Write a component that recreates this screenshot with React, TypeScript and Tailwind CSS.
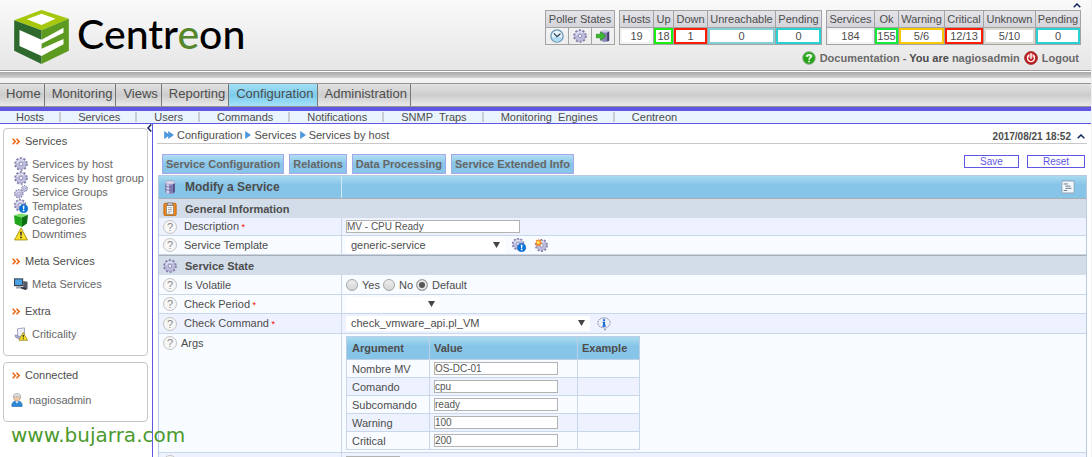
import React from "react";

const MAIN_MENU = ["Home", "Monitoring", "Views", "Reporting", "Configuration", "Administration"];

const SUB_MENU = [
  "Hosts",
  "Services",
  "Users",
  "Commands",
  "Notifications",
  "SNMP\u00a0 Traps",
  "Monitoring\u00a0 Engines",
  "Centreon",
];

const HOST_STATES = [
  { label: "Hosts", value: "19", width: "w-[34px]", border: "border-[#f2f2f2]" },
  { label: "Up", value: "18", width: "w-[20px]", border: "border-[#19ee11]" },
  { label: "Down", value: "1", width: "w-[34px]", border: "border-[#f91e05]" },
  { label: "Unreachable", value: "0", width: "w-[68px]", border: "border-[#82cfd8]" },
  { label: "Pending", value: "0", width: "w-[46px]", border: "border-[#2ad1d4]" },
];

const SERVICE_STATES = [
  { label: "Services", value: "184", width: "w-[48px]", border: "border-[#f2f2f2]" },
  { label: "Ok", value: "155", width: "w-[24px]", border: "border-[#13eb3a]" },
  { label: "Warning", value: "5/6", width: "w-[46px]", border: "border-[#f8c706]" },
  { label: "Critical", value: "12/13", width: "w-[39px]", border: "border-[#f91e05]" },
  { label: "Unknown", value: "5/10", width: "w-[52px]", border: "border-[#dcdad2]" },
  { label: "Pending", value: "0", width: "w-[45px]", border: "border-[#2ad1d4]" },
];

const ARGS = [
  { name: "Nombre MV", value: "OS-DC-01" },
  { name: "Comando", value: "cpu" },
  { name: "Subcomando", value: "ready" },
  { name: "Warning", value: "100" },
  { name: "Critical", value: "200" },
];

/* ---------- Icons ---------- */

function Svg({ children, className = "w-3.5 h-3.5" }: { children: React.ReactNode; className?: string }) {
  return (
    <svg viewBox="0 0 16 16" className={`${className} shrink-0`} aria-hidden="true">
      {children}
    </svg>
  );
}

function GearShape({ cx = 8, cy = 8, s = 1 }: { cx?: number; cy?: number; s?: number }) {
  return (
    <g transform={`translate(${cx} ${cy}) scale(${s})`}>
      <circle r="6.5" fill="none" stroke="#7f7da8" strokeWidth="2.6" strokeDasharray="2.3 1.78" />
      <circle r="5.9" fill="#bebddd" stroke="#9795be" strokeWidth="0.7" />
      <path d="M-4.500-1A4.600 4.600 0 0 1 3-3.500" fill="none" stroke="#e6e6f5" strokeWidth="1.500" />
      <circle r="2" fill="#f4f4fb" stroke="#8684b0" strokeWidth="0.9" />
    </g>
  );
}

function GearIcon() {
  return <Svg><GearShape /></Svg>;
}

function GearsIcon() {
  return (
    <Svg>
      <GearShape cx={5.5} cy={10} s={0.7} />
      <GearShape cx={12} cy={4} s={0.5} />
    </Svg>
  );
}

function TemplateIcon() {
  return (
    <Svg>
      <GearShape cx={7} cy={7} s={0.92} />
      <circle cx="11" cy="11" r="4.8" fill="#0b74dc" stroke="#0558ad" strokeWidth="0.6" />
      <path d="M10 7.8h2l-.4 3.8h-1.2zM10.1 12.4h1.8v1.5h-1.8z" fill="#fff" />
    </Svg>
  );
}

function GearSparkIcon() {
  return (
    <Svg>
      <GearShape cx={8.5} cy={8.5} s={0.95} />
      <path d="M4.5 0l1.2 2.6 2.8-1-1 2.8 2.3 1.3-2.6 1.1.6 2.7-2.6-1.2L3 10l.2-2.6L.4 6.2l2.5-1.4L1.9 2l2.5.8z" fill="#f5821e" />
      <circle cx="5" cy="5" r="1.8" fill="#ffe15a" />
    </Svg>
  );
}

function GreenCubeIcon() {
  return (
    <Svg>
      <path d="M0 2.500L7 .5l9 1.5-7 3z" fill="#7ee06a" />
      <path d="M0 2.500L9 5v11l-8-3.600z" fill="#1fa51b" />
      <path d="M9 5l7-3-1.200 10.100L9 16z" fill="#0c6f10" />
    </Svg>
  );
}

function WarningIcon() {
  return (
    <Svg>
      <path d="M8 1l7.4 13.8H.6z" fill="#fbe12a" stroke="#a38d12" strokeWidth="1" strokeLinejoin="round" />
      <path d="M7 5.5h2L8.6 10H7.4zM7.1 11h1.8v1.8H7.1z" fill="#222" />
    </Svg>
  );
}

function MonitorIcon() {
  return (
    <Svg>
      <path d="M0 1.5h10.5v9H0z" fill="#3b4150" />
      <path d="M1.2 2.7h8.1v6.4H1.2z" fill="#4aa3e6" />
      <path d="M3 10.5h5l1 2.5H2z" fill="#9a9faa" />
      <path d="M10.5 4.5l5 1v8.5l-5-1.4z" fill="#555b69" />
      <path d="M8 11l6 1.5v2.5L8 13z" fill="#31353f" />
    </Svg>
  );
}

function CriticalityIcon() {
  return (
    <Svg>
      <path d="M4 2l8-1v8l-8 3z" fill="#eeeef6" stroke="#9c9bbd" />
      <path d="M1 9l4 1 3 4-6-2z" fill="#a9a8cc" stroke="#807fa8" strokeWidth="0.7" />
      <path d="M10.6 6.2l5 9H5.6z" fill="#fbe12a" stroke="#8d7a10" strokeWidth="0.8" strokeLinejoin="round" />
      <path d="M9.9 9h1.4l-.3 3h-.8zM10 12.8h1.2V14H10z" fill="#111" />
    </Svg>
  );
}

function UserIcon() {
  return (
    <Svg>
      <path d="M2.2 15.5c-.6-4 1.6-6.3 5.8-6.3s6.4 2.3 5.8 6.3z" fill="#2b87d8" stroke="#1b62a8" strokeWidth="0.7" />
      <path d="M6 9.3h4L8 12z" fill="#fff" />
      <circle cx="8" cy="5" r="4.1" fill="#f3c9a2" stroke="#9c9c9c" strokeWidth="0.7" />
      <path d="M3.8 5C3.6 2 5.5.5 8 .5s4.400 1.500 4.200 4.500C10 4 6 4 3.800 5z" fill="#dcdcdc" stroke="#9c9c9c" strokeWidth="0.6" />
    </Svg>
  );
}

function DatabaseIcon() {
  return (
    <Svg>
      <path d="M2.5 3v10.5c0 1.3 2.5 2.2 5.5 2.2s5.500-.9 5.500-2.200V3z" fill="#8682b8" />
      <path d="M4 4v10.800c1 .4 1.800.6 3 .7V5z" fill="#d6d5ee" />
      <path d="M11.500 4.500l2-.8v10l-2 1.300z" fill="#4e4a82" />
      <ellipse cx="8" cy="2.8" rx="5.5" ry="2.2" fill="#d8d7ea" stroke="#8c89b4" strokeWidth="0.6" />
      <path d="M2.500 6.800c2 1.700 9 1.700 11 0M2.500 10.500c2 1.700 9 1.700 11 0" fill="none" stroke="#5d5994" strokeWidth="0.8" />
    </Svg>
  );
}

function ClipboardIcon() {
  return (
    <Svg>
      <rect x="1" y="1.5" width="14" height="14" rx="1.5" fill="#ee8a1d" stroke="#bd640a" />
      <path d="M4 4h8v10H4z" fill="#fff" stroke="#777" strokeWidth="0.8" />
      <path d="M5 1h6v3H5z" fill="#c9c9d6" stroke="#666" strokeWidth="0.7" />
      <path d="M5.500 6.500h5M5.500 8.500h5M5.500 10.500h5M5.500 12.300h3" stroke="#999" strokeWidth="0.9" />
    </Svg>
  );
}

function ClockIcon() {
  return (
    <Svg>
      <circle cx="8" cy="8" r="7" fill="#e8f5fd" stroke="#6d97b5" strokeWidth="1.5" />
      <path d="M2.500 9a5.500 5.500 0 0 0 11 0z" fill="#b2dcf5" />
      <path d="M4.500 5L8 8.700 12 5.500" fill="none" stroke="#2f4256" strokeWidth="1.5" />
    </Svg>
  );
}

function ExportIcon() {
  return (
    <Svg>
      <path d="M6 2v11.500c1.500 1.600 7.500 1.600 9 0V2z" fill="#8783b4" />
      <path d="M12.800 3v11l2.200-.6V2z" fill="#3f3b6b" />
      <ellipse cx="10.5" cy="2.5" rx="4.5" ry="1.6" fill="#cfcde4" />
      <path d="M0 6h5V3l6 5-6 5v-3H0z" fill="#3cbd2e" stroke="#1d7d17" strokeWidth="0.7" />
    </Svg>
  );
}

function DocIcon() {
  return (
    <Svg>
      <circle cx="8" cy="8" r="7.3" fill="#27a417" stroke="#a8b5a8" />
      <path d="M3 6a5.300 4 0 0 1 10 0 8 5 0 0 1-10 0" fill="#6bd05c" />
      <path d="M5.700 6.500c0-3 4.800-3 4.800-.3C10.500 8 8.100 8 8.100 10" fill="none" stroke="#fff" strokeWidth="1.8" />
      <path d="M7.200 11.100h1.900v1.800H7.200z" fill="#fff" />
    </Svg>
  );
}

function LogoutIcon() {
  return (
    <Svg>
      <circle cx="8" cy="8" r="7.3" fill="#c4151a" stroke="#8f3535" />
      <path d="M2.800 6.500a5.300 5 0 0 1 10.400 0c-3 2-7 2-10.400 0" fill="#e2676a" />
      <path d="M5.300 5.200a4 4 0 1 0 5.400 0M8 3v5.500" fill="none" stroke="#fff" strokeWidth="1.6" strokeLinecap="round" />
    </Svg>
  );
}

function InfoBubbleIcon() {
  return (
    <Svg>
      <path d="M8 1c4.300 0 7 2.300 7 5.700 0 2.500-1.600 4.300-4 5.100L9 15.500l-.5-3.300C4 12.500 1 10.300 1 6.700 1 3.300 3.700 1 8 1z" fill="#edf1fa" stroke="#8f90b0" strokeWidth="1.1" strokeDasharray="2 0.7" />
      <path d="M7 2.500h2.200v2H7zM6.200 5.500h3v4.300h1v1.200H6v-1.200h1V6.700h-.8z" fill="#1067d6" />
    </Svg>
  );
}

function ListIcon() {
  return (
    <Svg>
      <rect x="1" y="1" width="14" height="14" rx="1" fill="#f5f9fc" stroke="#8ba9bf" strokeWidth="1.2" />
      <path d="M3 4.500h5M5 7h6M5 9.500h7M3 12h4" stroke="#68788a" strokeWidth="1.1" />
    </Svg>
  );
}

function OrangeChevrons() {
  return (
    <svg viewBox="0 0 8 7" className="w-2 h-[7px] shrink-0" aria-hidden="true">
      <path d="M.7.7l2.600 2.800L.7 6.300M4.500.7l2.600 2.800-2.600 2.800" fill="none" stroke="#f26411" strokeWidth="1.5" />
    </svg>
  );
}

function Caret() {
  return (
    <svg viewBox="0 0 8 5" className="w-2 h-[5px]" aria-hidden="true">
      <path d="M.7 4.300L4 1l3.300 3.300" fill="none" stroke="#12265c" strokeWidth="1.5" />
    </svg>
  );
}

function BlueArrow({ double = false }: { double?: boolean }) {
  return (
    <svg viewBox={double ? "0 0 10 8" : "0 0 6 8"} className={double ? "w-2.5 h-2" : "w-1.5 h-2"} aria-hidden="true">
      <path d="M.5.5L5.500 4 .5 7.500z" fill="#4b9ae0" stroke="#3a82c8" strokeWidth="0.5" />
      {double && <path d="M4.500.5L9.500 4l-5 3.500z" fill="#4b9ae0" stroke="#3a82c8" strokeWidth="0.5" />}
    </svg>
  );
}

function CentreonCube() {
  return (
    <svg viewBox="42 30 164 162" className="w-[55px] h-[54px]" aria-hidden="true">
      <path d="M124 30L206 56 124 91 42 61z" fill="#a5c70c" />
      <path d="M124 41L166 56 124 75 80 58z" fill="#fff" />
      <path d="M42 61L124 91V192L42 152z" fill="#2e6a2d" />
      <path d="M124 91L206 56V152L124 192z" fill="#5c9a20" />
      <path d="M58 90L124 119 190 83V98L124 131V146L190 117V133L124 168 58 138z" fill="#fff" />
    </svg>
  );
}

/* ---------- Header ---------- */

interface StateCell {
  label: string;
  value: string;
  width: string;
  border: string;
}

function StateTable({ cells }: { cells: StateCell[] }) {
  return (
    <table className="border-collapse text-center leading-[13px]">
      <thead>
        <tr className="h-[17px] bg-linear-to-b from-[#e4e4e8] to-[#d3d3da]">
          {cells.map((c) => (
            <th key={c.label} className={`${c.width} border border-[#a3a3a3] p-0 font-normal`}>{c.label}</th>
          ))}
        </tr>
      </thead>
      <tbody>
        <tr className="h-[17px] bg-white">
          {cells.map((c) => (
            <td key={c.label} className="border border-[#a3a3a3] p-0">
              <div className={`h-4 border-2 leading-[12px] ${c.border}`}>{c.value}</div>
            </td>
          ))}
        </tr>
      </tbody>
    </table>
  );
}

function Header() {
  return (
    <header className="flex shrink-0 justify-between border-b border-[#9c9c9c] bg-linear-to-b from-[#fafafa] to-[#e6e6e6]">
      <div className="flex items-start gap-2 pl-3.5 pt-2.5">
        <CentreonCube />
        <span className="font-['Lato'] text-[41px] leading-[48px] font-medium text-black">
          Centr<span className="text-[#55872a]">e</span>on
        </span>
      </div>
      <div className="flex h-[70px] flex-col items-end pr-2.5">
        <button type="button" aria-label="Hide header" className="flex h-2.5 items-center">
          <Caret />
        </button>
        <div className="flex gap-1">
          <table className="border-collapse text-center leading-[13px]">
            <thead>
              <tr className="h-[17px] bg-linear-to-b from-[#e4e4e8] to-[#d3d3da]">
                <th colSpan={3} className="border border-[#a3a3a3] p-0 font-normal">Poller States</th>
              </tr>
            </thead>
            <tbody>
              <tr className="h-[17px]">
                {[<ClockIcon />, <GearIcon />, <ExportIcon />].map((icon, i) => (
                  <td key={i} className="w-[23px] border border-[#a3a3a3] p-0">
                    <div className="flex h-4 items-center justify-center">{icon}</div>
                  </td>
                ))}
              </tr>
            </tbody>
          </table>
          <StateTable cells={HOST_STATES} />
          <StateTable cells={SERVICE_STATES} />
        </div>
        <div className="mt-[5px] flex items-center gap-1 pr-0.5 font-bold leading-4 text-[#6a6a6a]">
          <DocIcon />
          <span>
            <a href="#doc">Documentation</a> - <span className="text-[#4a4a4a]">You are</span> <a href="#me">nagiosadmin</a>
          </span>
          <LogoutIcon />
          <a href="#logout">Logout</a>
        </div>
      </div>
    </header>
  );
}

function Menus() {
  return (
    <div className="shrink-0">
      <div className="h-[7px] border-t border-white bg-linear-to-b from-[#a8a8a8] to-[#d2d2d2]" />
      <div className="h-[5px] bg-[#f3f2f4]" />
      <nav className="flex h-6 border-y border-[#959595] bg-linear-to-b from-[#e2e2e2] via-[#cdcdcd] to-[#e9e9e9] text-[13px] leading-5">
        {MAIN_MENU.map((item) => (
          <a
            key={item}
            href={`#${item}`}
            className={
              item === "Configuration"
                ? "border-r border-[#777] bg-linear-to-b from-[#a5e2f6] via-[#7bcbec] to-[#a5e2fa] pl-[7px] pr-[3px]"
                : "border-r border-[#777] pl-[7px] pr-[3px] first:pl-1.5"
            }
          >
            {item}
          </a>
        ))}
      </nav>
      <nav className="flex items-center border-t-4 border-b border-[#5f57e3] bg-[#eaf4fe] pl-4 leading-3">
        {SUB_MENU.map((item, i) => (
          <React.Fragment key={item}>
            {i > 0 && <span className="ml-[15px] mr-[17px] h-2.5 w-0.5 bg-[#c9cdd4]" />}
            <a href={`#${item}`}>{item}</a>
          </React.Fragment>
        ))}
      </nav>
    </div>
  );
}

/* ---------- Sidebar ---------- */

function SideHeading({ children }: { children: React.ReactNode }) {
  return (
    <h2 className="flex items-center gap-[5px] pl-2 leading-[14px]">
      <OrangeChevrons />
      {children}
    </h2>
  );
}

function SideItem({ icon, children }: { icon: React.ReactNode; children: React.ReactNode }) {
  return (
    <li>
      <a href="#item" className="flex items-center gap-1 whitespace-nowrap pl-2.5 leading-[14px] text-[#666]">
        {icon}
        {children}
      </a>
    </li>
  );
}

function Sidebar() {
  return (
    <aside className="relative w-[153px] shrink-0 border-r border-[#5f57e3] pl-[3px] pr-1 pt-1">
      <button type="button" aria-label="Collapse menu" className="absolute right-0 top-0">
        <svg viewBox="0 0 5 8" className="w-[5px] h-2" aria-hidden="true">
          <path d="M4.300.5L1 4l3.300 3.500" fill="none" stroke="#12265c" strokeWidth="1.5" />
        </svg>
      </button>
      <div className="rounded border border-[#c8c8c8] pb-3.5 pt-[5px]">
        <SideHeading>Services</SideHeading>
        <ul className="mb-[13px] mt-[9px]">
          <SideItem icon={<GearIcon />}>Services by host</SideItem>
          <SideItem icon={<GearIcon />}>Services by host group</SideItem>
          <SideItem icon={<GearsIcon />}>Service Groups</SideItem>
          <SideItem icon={<TemplateIcon />}>Templates</SideItem>
          <SideItem icon={<GreenCubeIcon />}>Categories</SideItem>
          <SideItem icon={<WarningIcon />}>Downtimes</SideItem>
        </ul>
        <SideHeading>Meta Services</SideHeading>
        <ul className="mb-[13px] mt-[9px]">
          <SideItem icon={<MonitorIcon />}>Meta Services</SideItem>
        </ul>
        <SideHeading>Extra</SideHeading>
        <ul className="mt-[9px]">
          <SideItem icon={<CriticalityIcon />}>Criticality</SideItem>
        </ul>
      </div>
      <div className="mt-1.5 rounded border border-[#c8c8c8] pb-3.5 pt-[5px]">
        <SideHeading>Connected</SideHeading>
        <p className="mt-[11px] flex items-center gap-[5px] pl-1.5 leading-[14px] text-[#666]">
          <UserIcon />
          nagiosadmin
        </p>
      </div>
    </aside>
  );
}

/* ---------- Form ---------- */

function HelpMark() {
  return (
    <span className="flex h-3.5 w-3.5 shrink-0 items-center justify-center rounded-full border border-[#c4c4c4] bg-[#f7f7f7] leading-3 text-[#8a8a8a]">
      ?
    </span>
  );
}

interface RowProps {
  label?: string;
  htmlFor?: string;
  required?: boolean;
  className: string;
  labelClass?: string;
  children: React.ReactNode;
}

function Row({ label, htmlFor, required, className, labelClass = "gap-[7px] items-center", children }: RowProps) {
  return (
    <div className={`flex border-b border-[#c9d7ea] ${className}`}>
      <div className={`flex w-[183px] shrink-0 border-r border-[#c9d7ea] pl-1 ${labelClass}`}>
        <HelpMark />
        <label htmlFor={htmlFor}>
          {label}
          {required && <span className="text-[9px] text-[#f00]"> *</span>}
        </label>
      </div>
      <div className="flex items-center pl-1">{children}</div>
    </div>
  );
}

function SectionHeading({ icon, children }: { icon: React.ReactNode; children: React.ReactNode }) {
  return (
    <h2 className="flex h-5 items-center gap-2 border-t border-[#a9adb4] bg-[#d3dde9] pl-1 font-bold">
      {icon}
      {children}
    </h2>
  );
}

function Select({ id, value, className }: { id: string; value: string; className: string }) {
  return (
    <span className="relative">
      <select id={id} defaultValue={value} className={`block h-[15px] appearance-none bg-white pl-[5px] leading-[15px] ${className}`}>
        <option value={value}>{value}</option>
      </select>
      <svg viewBox="0 0 7 6" className="pointer-events-none absolute right-[5px] top-1 w-[7px] h-1.5" aria-hidden="true">
        <path d="M0 0h7L3.500 6z" fill="#444" />
      </svg>
    </span>
  );
}

const INPUT = "block h-[13px] border border-[#b3b3b3] bg-white p-0 text-[10px] leading-[11px] text-[#555]";
const RADIO =
  "h-3 w-3 appearance-none rounded-full border border-[#a6a6a6] bg-linear-to-b from-[#eee] to-[#d4d4d4] checked:bg-none checked:bg-[#555] checked:shadow-[inset_0_0_0_2px_#e6e6e6]";

function ServiceForm() {
  return (
    <form className="border-x border-t border-[#b9cbe3]">
      <div className="flex bg-linear-to-b from-[#a9dbf0] via-[#87c5e8] via-40% to-[#87c5e8]">
        <h1 className="flex h-[22px] w-[183px] shrink-0 items-center gap-2 border-r border-[#d4ebf7] pl-1 text-xs font-bold">
          <DatabaseIcon />
          Modify a Service
        </h1>
        <div className="flex flex-1 items-center justify-end pr-[11px]">
          <ListIcon />
        </div>
      </div>

      <SectionHeading icon={<ClipboardIcon />}>General Information</SectionHeading>
      <Row label="Description" htmlFor="description" required className="h-[18px] bg-[#edf2fe]">
        <input id="description" type="text" defaultValue="MV - CPU Ready" className={`${INPUT} w-[174px]`} />
      </Row>
      <Row label="Service Template" htmlFor="template" className="h-[19px] bg-[#f8fbff]">
        <Select id="template" value="generic-service" className="w-[159px]" />
        <span className="ml-[7px] flex gap-2">
          <TemplateIcon />
          <GearSparkIcon />
        </span>
      </Row>

      <SectionHeading icon={<GearIcon />}>Service State</SectionHeading>
      <Row label="Is Volatile" className="h-5 bg-[#f8fbff]">
        <div className="flex gap-[3px]">
          {["Yes", "No", "Default"].map((option) => (
            <label key={option} className="flex items-center gap-1">
              <input type="radio" name="volatile" defaultChecked={option === "Default"} className={RADIO} />
              {option}
            </label>
          ))}
        </div>
      </Row>
      <Row label="Check Period" htmlFor="period" required className="h-[19px] bg-[#f8fbff]">
        <Select id="period" value="" className="w-[94px]" />
      </Row>
      <Row label="Check Command" htmlFor="command" required className="h-5 bg-[#edf2fe]">
        <Select id="command" value="check_vmware_api.pl_VM" className="w-[244px]" />
        <span className="ml-[7px]">
          <InfoBubbleIcon />
        </span>
      </Row>
      <Row label="Args" className="bg-[#f8fbff]" labelClass="gap-1 items-start pt-0.5 leading-[14px]">
        <table className="my-0.5 border-collapse text-left">
          <thead>
            <tr className="h-[23px] bg-linear-to-b from-[#a9dbf0] via-[#87c5e8] via-40% to-[#87c5e8]">
              <th className="w-[83px] border border-[#bccfe6] px-[5px] py-0">Argument</th>
              <th className="w-[148px] border border-[#bccfe6] px-1 py-0">Value</th>
              <th className="w-[62px] border border-[#bccfe6] px-1 py-0">Example</th>
            </tr>
          </thead>
          <tbody>
            {ARGS.map((arg) => (
              <tr key={arg.name} className="h-[18px] bg-[#f8fbff] even:bg-[#edf2fe]">
                <td className="border border-[#c9d7ea] px-[5px] py-0">
                  <label htmlFor={arg.name}>{arg.name}</label>
                </td>
                <td className="border border-[#c9d7ea] px-1 py-0">
                  <input id={arg.name} type="text" defaultValue={arg.value} className={`${INPUT} w-[124px]`} />
                </td>
                <td className="border border-[#c9d7ea]" />
              </tr>
            ))}
          </tbody>
        </table>
      </Row>
      <Row className="h-[19px] bg-[#edf2fe]">
        <input aria-label="Max Check Attempts" type="text" className={`${INPUT} w-[54px]`} />
      </Row>
    </form>
  );
}

const TAB = "border border-[#a3a8ec] bg-linear-to-b from-[#b4def3] via-[#88c5e8] via-50% to-[#88c5e8] px-[3px] font-bold leading-[18px] text-[#666]";
const ACTION = "h-[13px] border border-[#5f57e3] bg-white text-[10px] leading-[11px] text-[#5f57e3]";

export default function App() {
  return (
    <div className="relative flex h-screen flex-col overflow-hidden border-r border-[#f1f1f1] bg-white font-['Liberation_Sans',Arial,sans-serif] text-[11px] leading-[14px] text-[#4d4d4d]">
      <Header />
      <Menus />
      <div className="flex min-h-0 flex-1">
        <Sidebar />
        <main className="min-w-0 flex-1 px-1">
          <div className="flex justify-between border-b border-[#c8c8c8]">
            <div className="flex h-[19px] items-center gap-[3px] pl-[7px] pt-0.5">
              <BlueArrow double />
              <a href="#configuration">Configuration</a>
              <BlueArrow />
              <a href="#services">Services</a>
              <BlueArrow />
              <a href="#by-host">Services by host</a>
            </div>
            <div className="flex items-center gap-1.5 pr-0.5 pt-1.5 text-[10px] font-bold leading-3">
              2017/08/21 18:52
              <Caret />
            </div>
          </div>

          <div className="ml-px flex items-start justify-between pl-1 pt-2.5">
            <div className="flex items-end gap-[5px] pb-px">
              <button type="button" className={TAB}>Service Configuration</button>
              <button type="button" className={TAB}>Relations</button>
              <button type="button" className={TAB}>Data Processing</button>
              <button type="button" className={TAB}>Service Extended Info</button>
            </div>
            <div className="flex gap-2 pr-0.5 pt-px">
              <button type="button" className={`${ACTION} w-[55px]`}>Save</button>
              <button type="button" className={`${ACTION} w-[58px]`}>Reset</button>
            </div>
          </div>
          <div className="ml-px">
            <ServiceForm />
          </div>
        </main>
      </div>

      <span className="absolute left-[11px] top-[423px] font-['DejaVu_Sans'] text-xl leading-6 text-[#4b9a2e]">
        www.bujarra.com
      </span>
    </div>
  );
}
